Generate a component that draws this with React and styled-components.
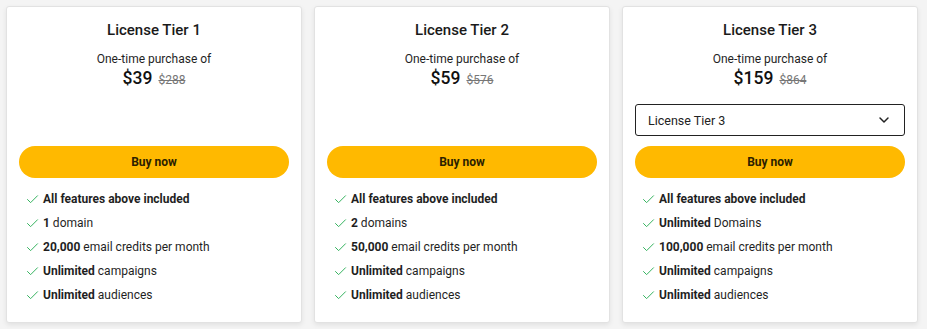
import styled, { createGlobalStyle } from "styled-components";
import { Check, ChevronDown } from "lucide-react";

const GlobalStyle = createGlobalStyle`
  body {
    margin: 0;
    background: #f4f4f4;
    font-family: Roboto, "Liberation Sans", sans-serif;
    color: #1f1f1f;
  }
`;

const Grid = styled.div`
  display: grid;
  grid-template-columns: repeat(3, 296px);
  gap: 12px;
  padding: 6px;
`;

const Card = styled.div`
  background: white;
  border: 1px solid #e2e2e2;
  border-radius: 3px;
  box-shadow: 0 2px 5px rgba(0, 0, 0, 0.08);
  padding: 13px 12px 20px;
  height: 317px;
  box-sizing: border-box;
  display: flex;
  flex-direction: column;

  & > * {
    flex-shrink: 0;
  }
`;

const Title = styled.h2`
  margin: 0;
  font-size: 15px;
  line-height: 20px;
  font-weight: 500;
  text-align: center;
  color: #1a1a1a;
`;

const Sub = styled.div`
  margin-top: 11px;
  font-size: 12px;
  line-height: 16px;
  text-align: center;
`;

const PriceRow = styled.div`
  display: flex;
  justify-content: center;
  align-items: baseline;
  gap: 6px;
  line-height: 22px;
`;

const Price = styled.span`
  font-size: 17.5px;
  font-weight: 500;
  color: #111;
`;

const OldPrice = styled.span`
  font-size: 12px;
  color: #777;
  text-decoration: line-through;
`;

const SelectSlot = styled.div`
  height: 45px;
  padding-top: 13px;
  box-sizing: border-box;
  margin-bottom: 10px;
`;

const Select = styled.div`
  height: 32px;
  border: 1px solid #222;
  border-radius: 3px;
  display: flex;
  align-items: center;
  justify-content: space-between;
  padding: 0 12px;
  font-size: 12.5px;
  color: #222;
  box-sizing: border-box;
`;

const BuyButton = styled.button`
  height: 32px;
  width: 100%;
  border: none;
  border-radius: 16px;
  background: #ffb900;
  color: #2b2100;
  font-family: inherit;
  font-size: 12px;
  font-weight: 700;
  cursor: pointer;
`;

const Features = styled.ul`
  list-style: none;
  margin: 9px 0 0;
  padding: 0 0 0 6px;
`;

const Feature = styled.li`
  display: flex;
  align-items: center;
  gap: 3px;
  height: 24px;
  font-size: 12px;
  color: #1f1f1f;

  b {
    font-weight: 700;
  }

  svg {
    color: #35b35f;
    flex-shrink: 0;
  }
`;

const tiers = [
  {
    name: "License Tier 1",
    price: "$39",
    old: "$288",
    features: [
      [<b key="a">All features above included</b>],
      [<b key="a">1</b>, " domain"],
      [<b key="a">20,000</b>, " email credits per month"],
      [<b key="a">Unlimited</b>, " campaigns"],
      [<b key="a">Unlimited</b>, " audiences"],
    ],
  },
  {
    name: "License Tier 2",
    price: "$59",
    old: "$576",
    features: [
      [<b key="a">All features above included</b>],
      [<b key="a">2</b>, " domains"],
      [<b key="a">50,000</b>, " email credits per month"],
      [<b key="a">Unlimited</b>, " campaigns"],
      [<b key="a">Unlimited</b>, " audiences"],
    ],
  },
  {
    name: "License Tier 3",
    price: "$159",
    old: "$864",
    select: true,
    features: [
      [<b key="a">All features above included</b>],
      [<b key="a">Unlimited</b>, " Domains"],
      [<b key="a">100,000</b>, " email credits per month"],
      [<b key="a">Unlimited</b>, " campaigns"],
      [<b key="a">Unlimited</b>, " audiences"],
    ],
  },
];

export default function App() {
  return (
    <>
      <GlobalStyle />
      <Grid>
        {tiers.map((t) => (
          <Card key={t.name}>
            <Title>{t.name}</Title>
            <Sub>One-time purchase of</Sub>
            <PriceRow>
              <Price>{t.price}</Price>
              <OldPrice>{t.old}</OldPrice>
            </PriceRow>
            <SelectSlot>
              {t.select && (
                <Select>
                  <span>License Tier 3</span>
                  <ChevronDown size={16} strokeWidth={2.2} />
                </Select>
              )}
            </SelectSlot>
            <BuyButton>Buy now</BuyButton>
            <Features>
              {t.features.map((f, i) => (
                <Feature key={i}>
                  <Check size={15} strokeWidth={1.6} />
                  <span>{f}</span>
                </Feature>
              ))}
            </Features>
          </Card>
        ))}
      </Grid>
    </>
  );
}
